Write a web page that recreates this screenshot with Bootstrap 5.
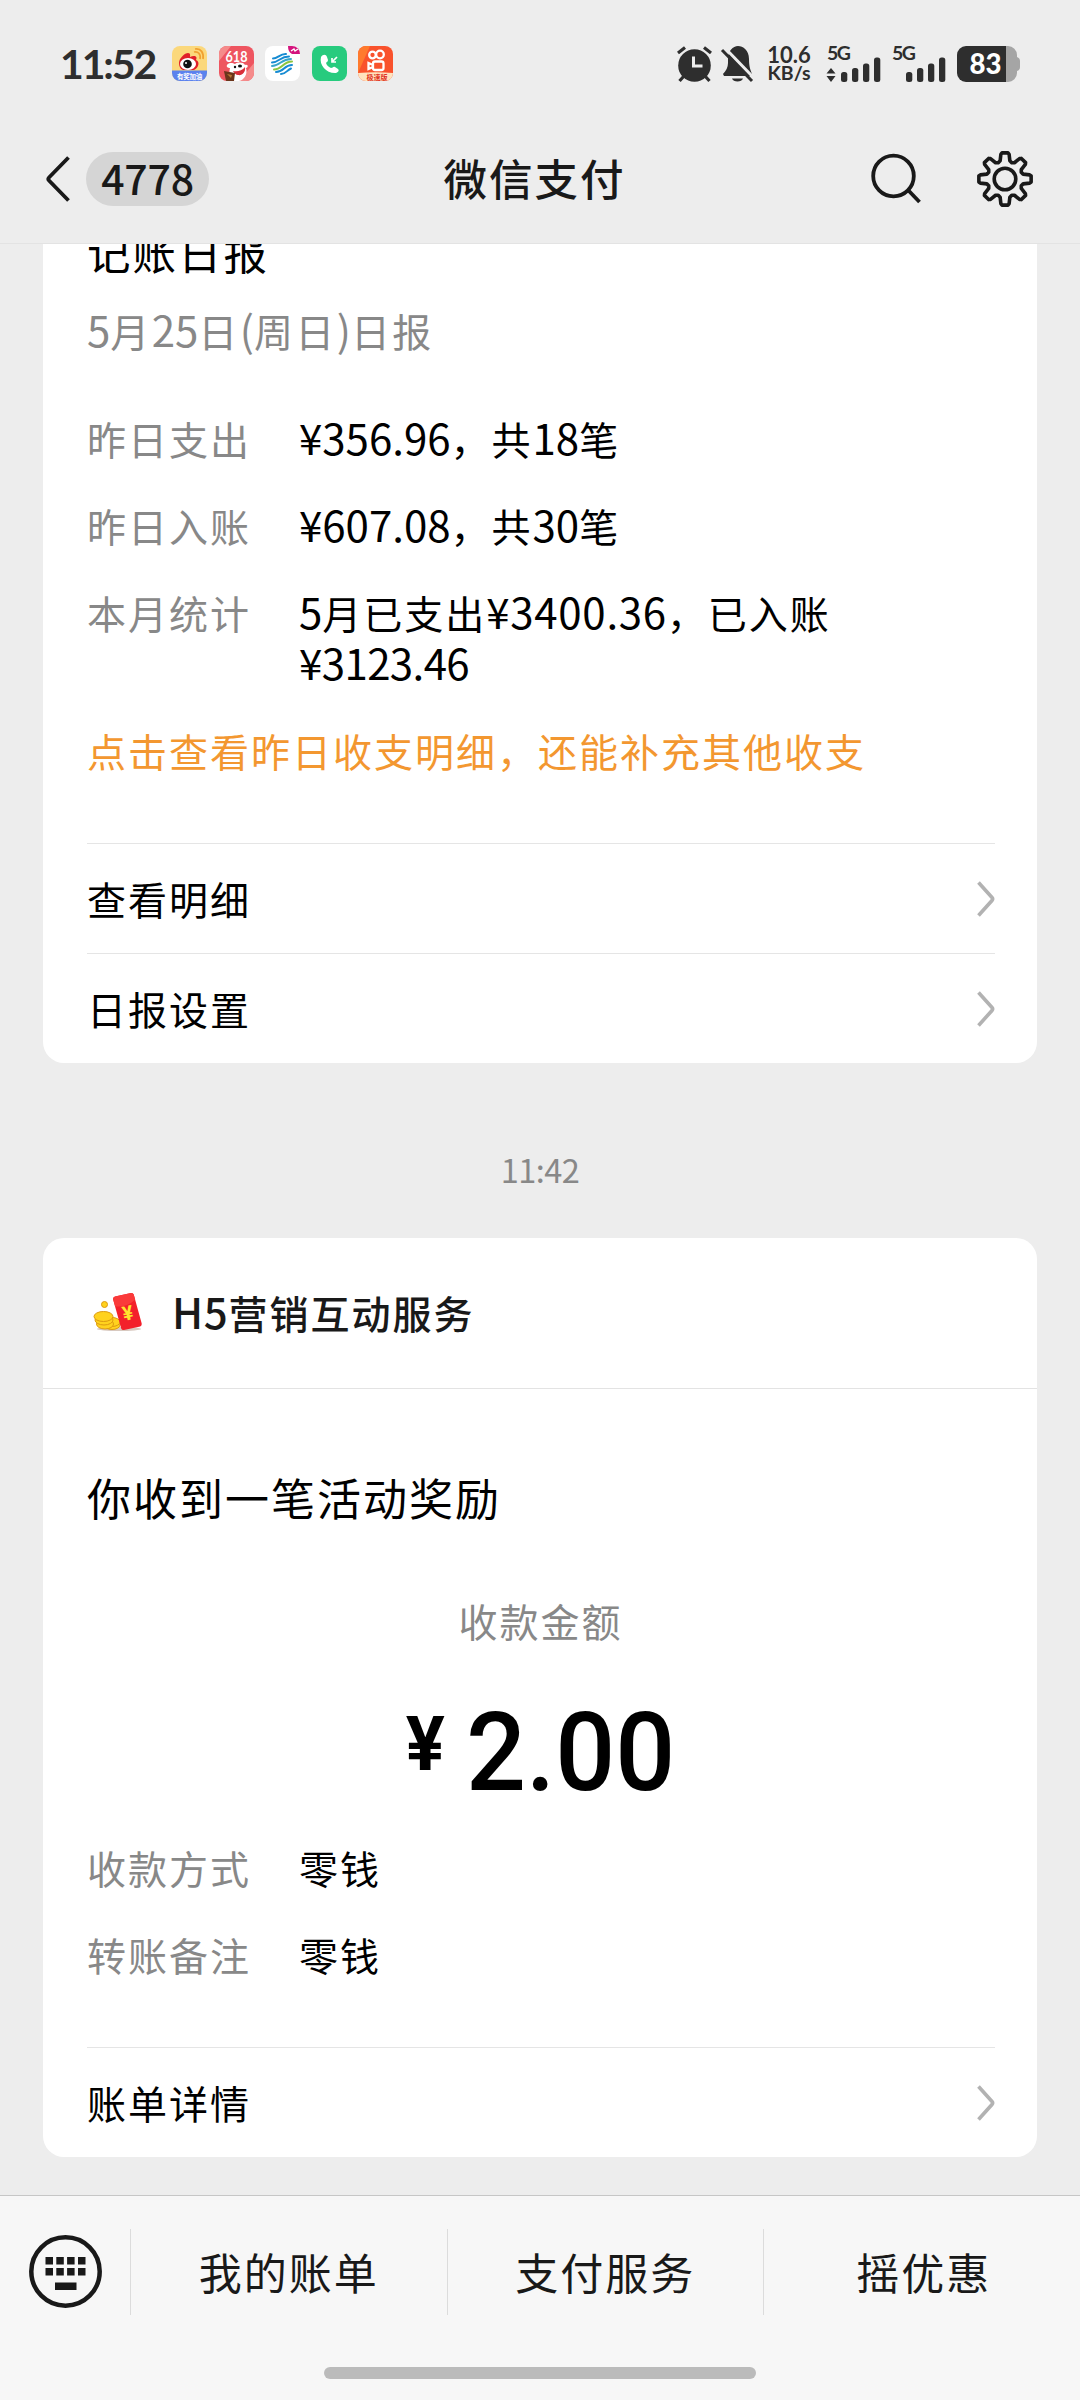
<!DOCTYPE html>
<html lang="zh-CN">
<head>
<meta charset="utf-8">
<title>微信支付</title>
<link href="https://cdn.jsdelivr.net/npm/bootstrap@5.3.0/dist/css/bootstrap.min.css" rel="stylesheet">
<style>
body{width:1080px;height:2400px;overflow:hidden;background:#ededed;color:#000;font-family:"Noto Sans CJK SC",sans-serif;font-size:39px;letter-spacing:2px;line-height:51px}
svg{display:block;flex:none;overflow:visible}
.status{height:128px;padding:46px 60px 0 60px;font-family:Lato,sans-serif;font-weight:700;color:#2e2e2e;letter-spacing:0}
.clock{width:112px;font-size:41px;line-height:35px;height:36px;letter-spacing:-2.1px;white-space:nowrap}
.apps{gap:11.5px}
.speed{width:44px;font-size:22px;line-height:18px;text-align:center;margin-left:14px;margin-right:1px}
.speed small{font-size:19.5px;display:block}
.topbar{height:116px;border-bottom:1px solid #e3e3e3;padding:0 46px 14px 46px;color:#191919}
.unread{width:123px;height:54px;background:#d5d5d5;font-size:41px;font-weight:500;letter-spacing:-.2px;line-height:50px;margin-left:16px}
.title{font-size:43.5px;font-weight:500;margin-right:11px;padding-bottom:2px}
.side{width:260px}
.feed{height:1951px;padding:0 43px;overflow:hidden}
.msg{border:0;border-radius:21px;padding:0;background:#fff;overflow:hidden}
.pad{padding:0 43px 0 44px}
.msg-first{margin-top:-22px}
.head{font-size:43.5px;line-height:60px}
.sub{line-height:96px;height:98px;color:#888;letter-spacing:2.4px}
.num{font-size:42px;letter-spacing:0;line-height:1}
.num-wide{letter-spacing:.7px}
.num-tight{letter-spacing:-.6px}
.rows{gap:36px}
.lbl{width:212px;flex:none;color:#888}
.val{width:560px}
.tip{color:#f39730}
.links{margin:0 42px 0 44px}
.links .link-row{height:110px;border-top:1px solid #e5e5e5}
.stamp{height:175px;padding-top:80px;font-size:32.5px;letter-spacing:-.5px;color:#888}
.payer{height:151px;border-bottom:1px solid #e3e3e3;padding:0 50px 2px 50px;font-weight:500;color:#191919}
.got{font-size:44px;margin-top:83px}
.amount{font-family:Roboto,sans-serif;font-weight:500;letter-spacing:0;height:80px;margin:66px 0 0;gap:22px;transform:scaleX(.96)}
.yen{font-size:76px;line-height:64px;font-weight:700}
.big{font-size:110px;line-height:82px}
.dock{height:205px;background:#f7f7f7;border-top:1px solid #c6c6c6;color:#191919}
.dock-row{height:152px}
.dock-item{height:86px;border-left:1px solid #dcdcdc;font-size:43px;width:316.5px;letter-spacing:2px;padding-bottom:2px}
.home{width:432px;height:12px;border-radius:6px;background:#bbb;margin-top:19px}
</style>
<script src="https://cdn.jsdelivr.net/npm/bootstrap@5.3.0/dist/js/bootstrap.bundle.min.js"></script>
</head>
<body>
<div class="status d-flex align-items-start">
  <div class="clock">11:52</div>
  <div class="apps d-flex">
    <svg width="35" height="35" viewBox="0 0 35 35"><defs><clipPath id="r"><rect width="35" height="35" rx="8"/></clipPath></defs><g clip-path="url(#r)"><rect width="35" height="35" fill="#fbd87c"/><rect y="24.5" width="35" height="11" fill="#5b82ee"/><path d="M7 17c0-5 6-10 9-10 3 0 2 3 2 4 4-2 8-1 6 3 4 1 3 8-2 10H11c-3-1-4-4-4-7z" fill="#e0202a"/><ellipse cx="16" cy="18" rx="8" ry="6" fill="#fff"/><circle cx="15.500" cy="18" r="4.300" fill="#111"/><circle cx="14" cy="17" r="1" fill="#fff"/><path d="M22 6c4-1 7 2 6 7M23 3c6-1 9 4 8 10" fill="none" stroke="#f0a030" stroke-width="1.700"/><text x="17.500" y="32.500" font-size="6.500" fill="#fff" text-anchor="middle" letter-spacing="-.3" font-family="Noto Sans CJK SC">有奖加油</text></g></svg>
    <svg width="35" height="35" viewBox="0 0 35 35"><g clip-path="url(#r)"><rect width="35" height="35" fill="#ee5560"/><path d="M0 0h12L0 15zM35 17v18H20z" fill="#f58b8b"/><text x="17.500" y="16" font-size="16" textLength="22" lengthAdjust="spacingAndGlyphs" fill="#fff" text-anchor="middle" font-family="Lato" font-weight="700">618</text><path d="M8 19c2-3 6-2 8-1 3-2 8-2 10 1 4-1 3 3 1 3 2 6-2 12-7 13h-6c-4-3-4-9-3-13-2 0-4-1-3-3z" fill="#fff"/><path d="M14 25c4 1 9 0 12-4 1 5-3 9-7 8-2 0-4-2-5-4z" fill="#d92f3a"/><circle cx="16" cy="21" r="1.200" fill="#111"/><ellipse cx="21" cy="20" rx="2" ry="1.500" fill="#111"/><path d="M5 25l11 2-1 8H7z" fill="#6b351b"/><path d="M8 28l5 1-1 3z" fill="#b77835"/></g></svg>
    <svg width="35" height="35" viewBox="0 0 35 35"><g clip-path="url(#r)"><rect width="35" height="35" fill="#fff"/><path d="M23 0h12v8h-8q-4-2-4-8z" fill="#d4147d"/><path d="M26 5l3-2 1 2 3-2" stroke="#fff" stroke-width="1.300" fill="none"/><g fill="none" stroke-width="2" stroke-linecap="round"><path d="M8 12.500c5 0 7-5 13-4.500M7 16.500c7 0 8-6 17-6" stroke="#168bd2"/><path d="M7 20c8 0 9-7 19-7" stroke="#3aa6c8"/><path d="M9 23.500c8 0 9-8 18-8" stroke="#8bc53f"/><path d="M11 26c8 0 8-7 16-7M16 28c5 0 6-4 10-5.500" stroke="#168bd2"/></g></g></svg>
    <svg width="35" height="35" viewBox="0 0 35 35"><rect width="35" height="35" rx="8" fill="#27cb7e"/><path d="M9 11c2-3 5-3 6 0l1 3c0 2-2 2-2 3 1 3 3 4 5 5 2 0 2-2 4-1l3 2c2 2-1 4-3 4C14 27 7 19 9 11z" fill="#fff"/><path d="M25 11l-5 5m0-4v4h4" fill="none" stroke="#fff" stroke-width="1.700"/></svg>
    <svg width="35" height="35" viewBox="0 0 35 35"><g clip-path="url(#r)"><rect width="35" height="35" fill="#f9522c"/><path d="M0 0h12L0 27z" fill="#ff7a2d"/><g fill="none" stroke="#fff" stroke-width="2.300"><circle cx="14.500" cy="9" r="3.300"/><circle cx="22" cy="8.500" r="3.800"/><rect x="15" y="15.500" width="10.500" height="8.500" rx="2"/><path d="M15 19l-4.500-2v6l4.500-2"/></g><path d="M0 27c12-1 23-1 35 0v8H0z" fill="#ffe3be"/><text x="19" y="33.500" font-size="7" letter-spacing="0" text-anchor="middle" fill="#df3323" font-family="Noto Sans CJK SC">极速版</text></g></svg>
  </div>
  <svg class="ms-auto" width="37" height="36" viewBox="0 0 37 36"><circle cx="18.500" cy="19.500" r="16.300" fill="#2e2e2e"/><path d="M2 7l7-5.500M35 7l-7-5.500M8 30l-4.500 5M29 30l4.500 5" stroke="#2e2e2e" stroke-width="3.200" fill="none"/><path d="M17.500 10.500v9.500h9" stroke="#ededed" stroke-width="3" fill="none"/></svg>
  <svg style="margin-left:9px" width="31" height="36" viewBox="0 0 31 36"><path d="M2 30l-1-2c3-3 5-7 5-11v-4C6 5 11 0 16 0s11 4 11 13c0 7 1 10 3 15l-1 2zM10 32.500h11c-1 4-10 4-11 0z" fill="#2e2e2e"/><path d="M2.500 1.500L31 31" stroke="#ededed" stroke-width="3"/><path d="M0 4L30 35" stroke="#2e2e2e" stroke-width="3"/></svg>
  <div class="speed">10.6<small>KB/s</small></div>
  <svg style="margin-left:14px" width="56" height="36" viewBox="0 0 56 36" fill="#2e2e2e"><text x="1" y="14" font-size="19.500" textLength="24" font-family="Lato" font-weight="700">5G</text><path d="M.5 27.500h9L5 22zM.5 30h9L5 36z"/><rect x="15" y="26" width="6.300" height="10" rx="2.500"/><rect x="26" y="22" width="6.300" height="14" rx="2.500"/><rect x="37" y="17.500" width="6.300" height="18.500" rx="2.500"/><rect x="48" y="11.500" width="6.300" height="24.500" rx="2.500"/></svg>
  <svg style="margin-left:9px" width="56" height="36" viewBox="0 0 56 36" fill="#2e2e2e"><text x="1" y="14" font-size="19.500" textLength="24" font-family="Lato" font-weight="700">5G</text><rect x="15" y="26" width="6.300" height="10" rx="2.500"/><rect x="26" y="22" width="6.300" height="14" rx="2.500"/><rect x="37" y="17.500" width="6.300" height="18.500" rx="2.500"/><rect x="48" y="11.500" width="6.300" height="24.500" rx="2.500"/></svg>
  <svg style="margin-left:10px" width="63" height="36" viewBox="0 0 63 36"><path d="M49 0h2a9 9 0 0 1 9 9v2q3 1 3 4v6q0 3-3 4v2a9 9 0 0 1-9 9h-2z" fill="#a5a5a5"/><path d="M9 0h40v36H9a9 9 0 0 1-9-9V9a9 9 0 0 1 9-9z" fill="#2e2e2e"/><text x="12.500" y="28.300" font-size="28.500" textLength="32" lengthAdjust="spacingAndGlyphs" fill="#fff" font-family="Lato" font-weight="900">83</text></svg>
</div>
<nav class="topbar d-flex align-items-center justify-content-between">
  <div class="side d-flex align-items-center">
    <svg width="24" height="46" viewBox="0 0 24 46"><path d="M22.500 1.500L3 21.500q-1.400 1.500 0 3L22.500 44.500" fill="none" stroke="#191919" stroke-width="3.800"/></svg>
    <span class="unread rounded-pill text-center">4778</span>
  </div>
  <div class="title">微信支付</div>
  <div class="side d-flex align-items-center justify-content-end">
    <svg width="50" height="52" viewBox="0 0 50 52"><g fill="none" stroke="#191919" stroke-width="3.800"><circle cx="22.500" cy="23" r="20.300"/><path d="M37.500 37.500l11 11.500"/></g></svg>
    <svg style="margin-left:56px" width="57" height="57" viewBox="-28 -29 57 57"><path id="gear" fill="none" stroke="#191919" stroke-width="3.600" stroke-linejoin="round"/><circle r="10.800" fill="none" stroke="#191919" stroke-width="3.600"/></svg>
  </div>
</nav>
<main class="feed">
  <section class="card msg msg-first">
    <div class="pad">
      <div class="head">记账日报</div>
      <div class="sub"><span class="num">5</span>月<span class="num">25</span>日<span class="num">(</span>周日<span class="num">)</span>日报</div>
      <div class="rows d-flex flex-column" style="padding-top:33px">
        <div class="d-flex"><div class="lbl">昨日支出</div><div class="val"><span class="num">¥356.96</span>，共<span class="num">18</span>笔</div></div>
        <div class="d-flex"><div class="lbl">昨日入账</div><div class="val"><span class="num">¥607.08</span>，共<span class="num">30</span>笔</div></div>
        <div class="d-flex"><div class="lbl">本月统计</div><div class="val"><span class="num">5</span>月已支出<span class="num num-wide">¥3400.36</span>，已入账<br><span class="num num-tight">¥3123.46</span></div></div>
        <div class="tip">点击查看昨日收支明细，还能补充其他收支</div>
      </div>
    </div>
    <div class="links" style="padding-top:67px">
      <div class="link-row d-flex align-items-center justify-content-between">查看明细<svg width="18" height="36" viewBox="0 0 18 36"><path d="M1.500 1.500L15 16.500q1.300 1.500 0 3L1.500 34.500" fill="none" stroke="#b2b2b2" stroke-width="3.600"/></svg></div>
      <div class="link-row d-flex align-items-center justify-content-between">日报设置<svg width="18" height="36" viewBox="0 0 18 36"><path d="M1.500 1.500L15 16.500q1.300 1.500 0 3L1.500 34.500" fill="none" stroke="#b2b2b2" stroke-width="3.600"/></svg></div>
    </div>
  </section>
  <div class="stamp text-center">11:42</div>
  <section class="card msg">
    <div class="payer d-flex align-items-center">
      <svg width="50" height="40" viewBox="0 0 50 40"><ellipse cx="26" cy="37" rx="22" ry="2" fill="#d8c9c0"/><g fill="#ffd21e" stroke="#dd9a10" stroke-width="1"><ellipse cx="19" cy="33" rx="8" ry="4.500"/><ellipse cx="19" cy="30" rx="8" ry="4.500"/><ellipse cx="12" cy="32" rx="8.500" ry="5"/><ellipse cx="11" cy="28" rx="9" ry="5"/><ellipse cx="10.500" cy="24.500" rx="9.500" ry="5"/><circle cx="11.500" cy="12.500" r="3"/></g><path d="M20 7q0-2 2-2.500L38 1q2-.5 2.700 1.500l8 29q.5 2-1.500 3L31 38q-2 .5-2.800-1.500z" fill="#f3202b"/><path d="M20 7q0-2 2-2.500L38 1q2-.5 2.700 1.500l1.500 5q-8 8-20 7z" fill="#fa3a3a"/><text x="35" y="28" transform="rotate(-12 35 22)" font-size="20" font-weight="700" letter-spacing="0" text-anchor="middle" fill="#ffe52e" font-family="Roboto">¥</text></svg>
      <span style="margin-left:29px"><span class="num num-wide">H5</span>营销互动服务</span>
    </div>
    <div class="pad">
      <div class="got">你收到一笔活动奖励</div>
      <div class="text-center" style="margin-top:72px;color:#888">收款金额</div>
      <div class="amount d-flex justify-content-center"><span class="yen">¥</span><span class="big">2.00</span></div>
      <div class="rows d-flex flex-column" style="padding-top:50px">
        <div class="d-flex"><div class="lbl">收款方式</div><div>零钱</div></div>
        <div class="d-flex"><div class="lbl">转账备注</div><div>零钱</div></div>
      </div>
    </div>
    <div class="links" style="padding-top:67px">
      <div class="link-row d-flex align-items-center justify-content-between">账单详情<svg width="18" height="36" viewBox="0 0 18 36"><path d="M1.500 1.500L15 16.500q1.300 1.500 0 3L1.500 34.500" fill="none" stroke="#b2b2b2" stroke-width="3.600"/></svg></div>
    </div>
  </section>
</main>
<footer class="dock">
  <div class="dock-row d-flex align-items-center">
    <div style="width:130px;padding:0 0 2px 29px"><svg width="73" height="73" viewBox="0 0 73 73"><circle cx="36.500" cy="36.500" r="34.200" fill="none" stroke="#191919" stroke-width="4.500"/><path d="M16.500 22h7.500v7.500h-7.500zM27.300 22h7.500v7.500h-7.500zM38.100 22h7.500v7.500h-7.500zM49 22h7.500v7.500H49zM16.500 33h7.500v7.500h-7.500zM27.300 33h7.500v7.500h-7.500zM38.100 33h7.500v7.500h-7.500zM49 33h7.500v7.500H49zM26 47.500h21.500V55H26z" fill="#191919"/></svg></div>
    <div class="dock-item d-flex align-items-center justify-content-center">我的账单</div>
    <div class="dock-item d-flex align-items-center justify-content-center">支付服务</div>
    <div class="dock-item d-flex align-items-center justify-content-center ps-1">摇优惠</div>
  </div>
  <div class="home mx-auto"></div>
</footer>
<script>
// Eight-tooth gear outline: each tooth has a flat tip and flared flanks meeting in a shallow valley
(function(){
  var pts=[[-22.5,17.600],[-15,18.800],[-9.500,25],[-6.500,26.300],[6.500,26.300],[9.500,25],[15,18.800]],d='';
  for(var k=0;k<8;k++)pts.forEach(function(p){
    var a=(k*45+p[0]-90)*Math.PI/180;
    d+=(d?'L':'M')+(p[1]*Math.cos(a)).toFixed(2)+' '+(p[1]*Math.sin(a)).toFixed(2);
  });
  document.getElementById('gear').setAttribute('d',d+'Z');
})();
</script>
</body>
</html>
